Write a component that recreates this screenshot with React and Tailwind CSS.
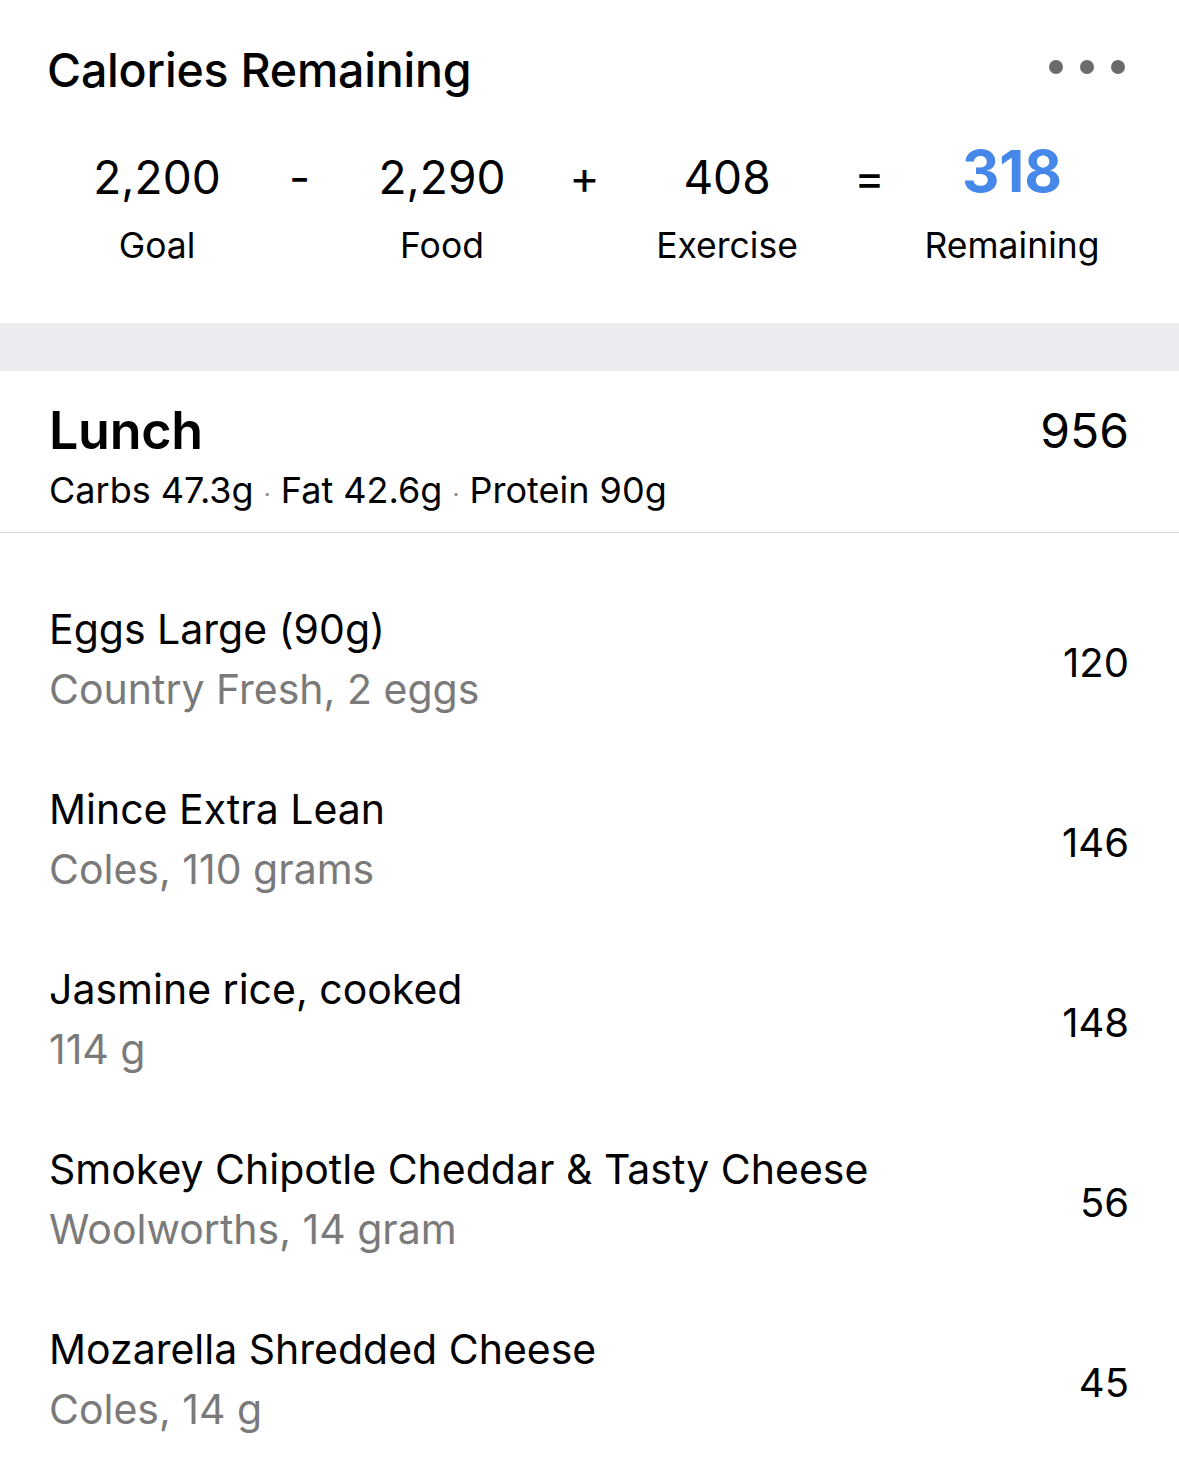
const summary = [
  { value: "2,200", label: "Goal" },
  { value: "2,290", label: "Food" },
  { value: "408", label: "Exercise" },
  { value: "318", label: "Remaining", highlight: true },
];

const ops = ["-", "+", "="];

const foods = [
  { name: "Eggs Large (90g)", detail: "Country Fresh, 2 eggs", cals: 120 },
  { name: "Mince Extra Lean", detail: "Coles, 110 grams", cals: 146 },
  { name: "Jasmine rice, cooked", detail: "114 g", cals: 148 },
  { name: "Smokey Chipotle Cheddar & Tasty Cheese", detail: "Woolworths, 14 gram", cals: 56 },
  { name: "Mozarella Shredded Cheese", detail: "Coles, 14 g", cals: 45 },
];

function SummaryCell({ item }) {
  return (
    <div className="flex flex-col items-center">
      {item.highlight ? (
        <span className="text-[58px] leading-[64px] font-bold text-[#4687ea] -mt-[6px] mb-[6px]">
          {item.value}
        </span>
      ) : (
        <span className="text-[46px] leading-[64px] text-black">{item.value}</span>
      )}
      <span className="text-[35.5px] leading-[46px] text-black mt-[14px]">{item.label}</span>
    </div>
  );
}

export default function App() {
  return (
    <div
      className="w-[1179px] h-[1475px] bg-white overflow-hidden text-black"
      style={{ fontFamily: "Inter, 'Noto Sans', sans-serif" }}
    >
      {/* header */}
      <div className="h-[323px] pt-[38px]">
        <div className="flex items-center justify-between pl-[47px] pr-[54px]">
          <h1 className="text-[46.5px] leading-[64px] font-medium tracking-[-0.2px]">Calories Remaining</h1>
          <div className="flex gap-[17px] items-center -mt-[6px]">
            <span className="w-[14px] h-[14px] rounded-full bg-[#6b6b6b]" />
            <span className="w-[14px] h-[14px] rounded-full bg-[#6b6b6b]" />
            <span className="w-[14px] h-[14px] rounded-full bg-[#6b6b6b]" />
          </div>
        </div>

        <div className="grid grid-cols-[200px_85px_200px_85px_200px_85px_200px] ml-[57px] mt-[43px]">
          {summary.map((item, i) => (
            <>
              <SummaryCell key={item.label} item={item} />
              {i < ops.length && (
                <span key={"op" + i} className="text-[46px] leading-[64px] text-center">
                  {ops[i]}
                </span>
              )}
            </>
          ))}
        </div>
      </div>

      {/* spacer band */}
      <div className="h-[48px] bg-[#ebebf0]" />

      {/* lunch header */}
      <div className="border-b border-[#d9d9d9] pl-[49px] pr-[50px] pt-[28px] h-[162px]">
        <div className="flex items-center justify-between">
          <h2 className="text-[52px] leading-[64px] font-semibold tracking-[-0.3px]">Lunch</h2>
          <span className="text-[48px] leading-[64px]">956</span>
        </div>
        <p className="text-[36px] leading-[46px] mt-[4px]">
          Carbs 47.3g <span className="text-[#888] text-[24px]">·</span> Fat 42.6g{" "}
          <span className="text-[#888] text-[24px]">·</span> Protein 90g
        </p>
      </div>

      {/* food list */}
      <div className="pt-[40px]">
        {foods.map((f) => (
          <div key={f.name} className="h-[180px] flex items-center justify-between pl-[49px] pr-[50px]">
            <div className="flex flex-col pb-[9px]">
              <span className="text-[41px] leading-[60px]">{f.name}</span>
              <span className="text-[41px] leading-[60px] text-[#7a7a7a]">{f.detail}</span>
            </div>
            <span className="text-[40px] leading-[60px]">{f.cals}</span>
          </div>
        ))}
      </div>
    </div>
  );
}
